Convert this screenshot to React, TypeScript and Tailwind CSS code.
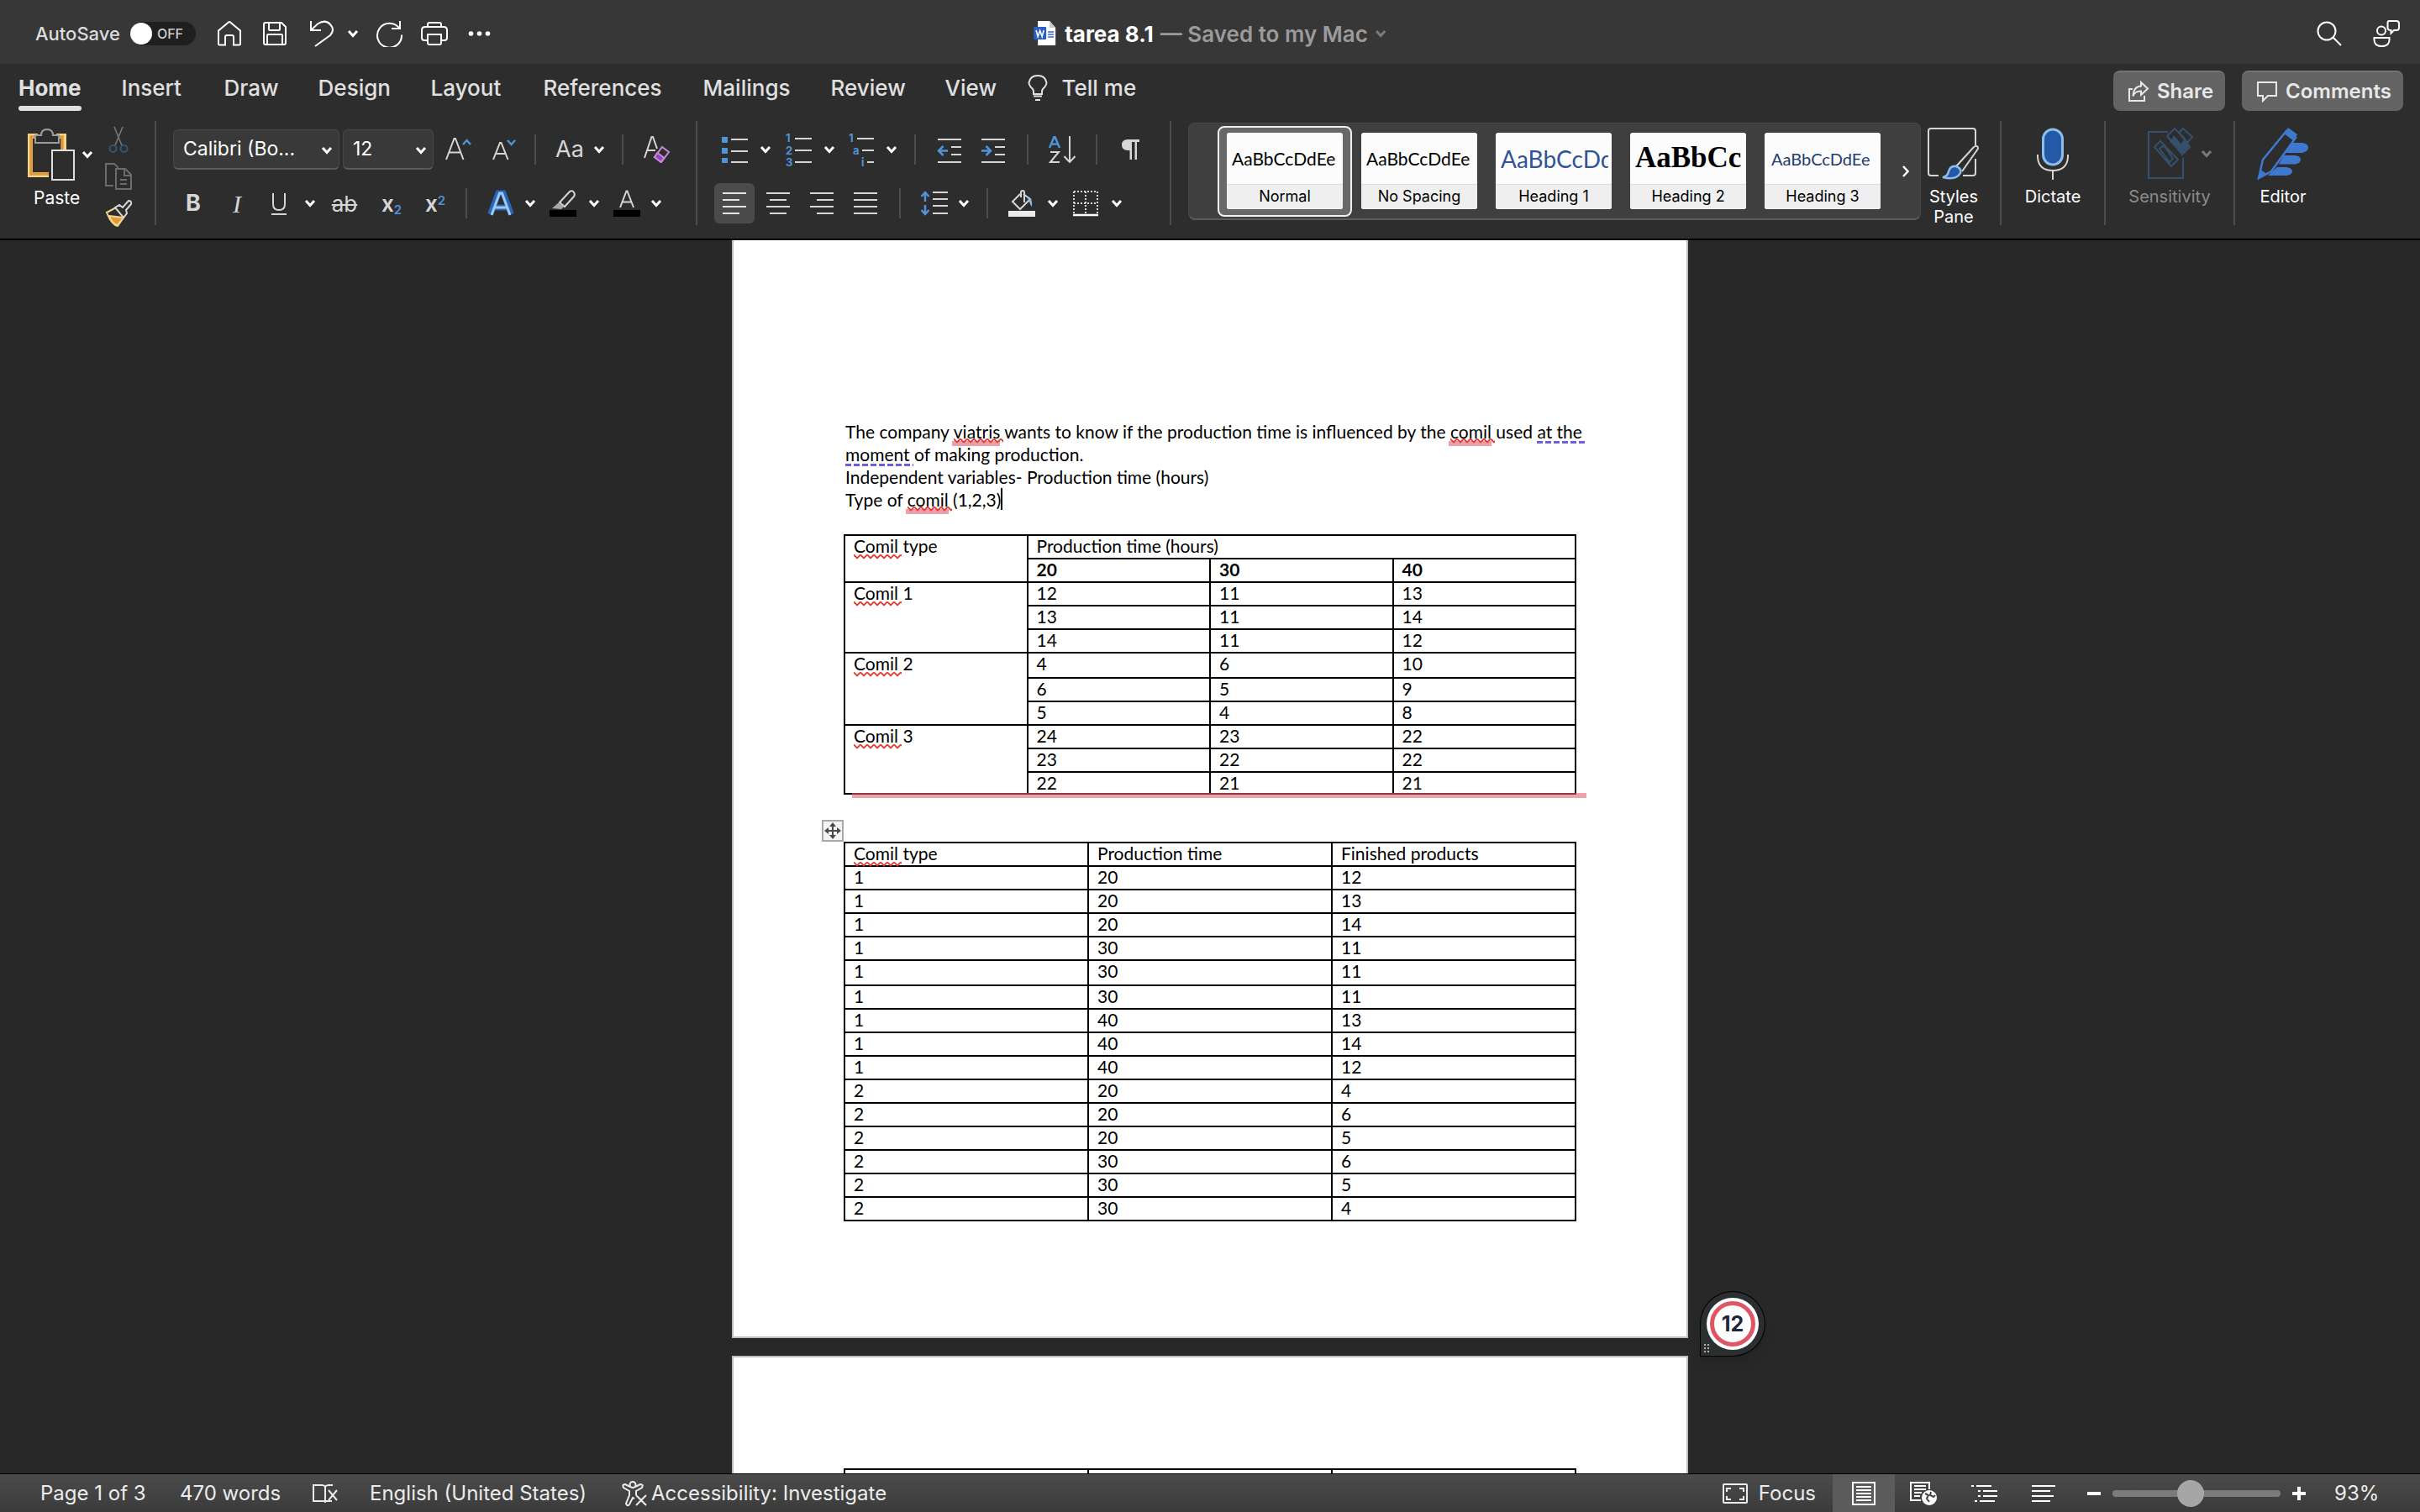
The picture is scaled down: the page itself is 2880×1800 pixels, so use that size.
import React from "react";

const UI = "font-['Inter',sans-serif]";
const DOC = "font-['Lato',sans-serif]";

type SvgProps = { w?: number; h?: number; children: React.ReactNode; className?: string };

function Svg({ w = 32, h = 32, children, className = "" }: SvgProps) {
  return (
    <svg width={w} height={h} viewBox={`0 0 ${w} ${h}`} fill="none" stroke="currentColor" strokeWidth={2} className={`shrink-0 ${className}`} aria-hidden="true">
      {children}
    </svg>
  );
}

function Tool({ label, className = "", children }: { label: string; className?: string; children: React.ReactNode }) {
  return (
    <button aria-label={label} className={`flex h-12 w-8 shrink-0 items-center justify-center text-[#d6d6d6] ${className}`}>
      {children}
    </button>
  );
}

function ChevronGlyph({ className = "" }: { className?: string }) {
  return (
    <Svg w={14} h={10} className={className}>
      <path d="M2 2l5 5.500L12 2" strokeWidth={3} />
    </Svg>
  );
}

function Chevron({ label, className = "" }: { label: string; className?: string }) {
  return (
    <button aria-label={label} className={`flex h-12 w-[14px] shrink-0 items-center text-white ${className}`}>
      <ChevronGlyph />
    </button>
  );
}

function Sep({ className = "" }: { className?: string }) {
  return <div className={`h-9 w-[2px] shrink-0 bg-[#4c4c4c] ${className}`} />;
}

function GroupSep({ className = "" }: { className?: string }) {
  return <div className={`h-[124px] w-[2px] shrink-0 bg-[#4c4c4c] ${className}`} />;
}

function Picker({ label, value, className }: { label: string; value: string; className: string }) {
  return (
    <div className={`relative h-12 shrink-0 ${className}`}>
      <select aria-label={label} className="h-full w-full appearance-none rounded-md border border-b-2 border-[#484848] border-b-[#5a5a5a] bg-[#393939] pl-[11px] pr-8 text-[23px] text-white">
        <option>{value}</option>
      </select>
      <ChevronGlyph className="pointer-events-none absolute right-2 top-5 text-white" />
    </div>
  );
}

/* ---------- title bar ---------- */

function TitleBar() {
  return (
    <header className="relative flex h-[76px] shrink-0 items-center bg-[#373737] pb-0 pl-[42px] pr-6 pt-1 text-white">
      <label htmlFor="autosave" className="text-[22px] font-medium text-[#dcdcdc]">AutoSave</label>
      <span className="relative ml-3 h-7 w-[78px] rounded-full bg-[#1f1f1f]">
        <input id="autosave" type="checkbox" role="switch" className="absolute inset-0 h-full w-full appearance-none rounded-full" />
        <span className="pointer-events-none absolute left-0 top-[1px] h-[26px] w-[26px] rounded-full bg-white" />
        <span className="pointer-events-none absolute left-8 top-0 text-[16px] font-medium leading-7 text-[#cfcfcf]">OFF</span>
      </span>
      <nav className="ml-6 flex items-center">
        <button aria-label="Home"><Svg><path d="M3 29V12.500L15 2.400q1-.8 2 0L29 12.500V28q0 1.500-1.500 1.500H21V20q0-2-2-2h-6q-2 0-2 2v9.500H4.500Q3 29.500 3 28z" /></Svg></button>
        <button aria-label="Save" className="ml-[22px]">
          <Svg><path d="M5 3h19l5 5v19q0 2-2 2H5q-2 0-2-2V5q0-2 2-2zM9 3v8q0 1 1 1h11q1 0 1-1V3M7 29V18q0-1 1-1h16q1 0 1 1v11" /></Svg>
        </button>
        <button aria-label="Undo" className="ml-6"><Svg><path d="M3 1v11h12M3 12l8-7.500Q20-1.500 26 5t0 13L8 31" /></Svg></button>
        <button aria-label="Undo options" className="ml-[14px]"><ChevronGlyph /></button>
        <button aria-label="Redo" className="ml-5"><Svg><path d="M29 1v9H19M28.500 10A14.500 14.500 0 1 0 31 17.500" /></Svg></button>
        <button aria-label="Print" className="ml-[22px]">
          <Svg><path d="M8 8V5q0-2 2-2h12q2 0 2 2v3M8 24H4q-3 0-3-3v-9q0-4 4-4h22q4 0 4 4v9q0 3-3 3h-4M8 17h16v10q0 2-2 2H10q-2 0-2-2z" /></Svg>
        </button>
        <button aria-label="More" className="ml-6">
          <Svg w={28} h={8}><g fill="currentColor" stroke="none"><circle cx="3.500" cy="4" r="2.800" /><circle cx="13.500" cy="4" r="2.800" /><circle cx="23.500" cy="4" r="2.800" /></g></Svg>
        </button>
      </nav>
      <div className="absolute left-1/2 flex -translate-x-1/2 items-center whitespace-nowrap text-[26px] font-bold">
        <Svg w={28} h={32}>
          <path d="M5 1h14l7 8v21H5z" fill="#fff" stroke="none" />
          <path d="M19 1l7 8h-7z" fill="#c9c9c9" stroke="none" />
          <path d="M17 14h7M17 17h7M17 20h7" stroke="#2f66c9" strokeWidth={1.500} />
          <rect x="0" y="8" width="15" height="15" rx="1" fill="#2b5fc4" stroke="none" />
          <path d="M3 12l2 7.500 2.500-7 2.500 7L12 12" stroke="#fff" strokeWidth={1.600} />
        </Svg>
        <h1 className="ml-[9px]">tarea 8.1</h1>
        <span className="ml-2 font-semibold text-[#9b9b9b]">— Saved to my Mac</span>
        <ChevronGlyph className="ml-2 text-[#7a7a7a]" />
      </div>
      <div className="ml-auto flex items-center gap-9">
        <button aria-label="Search"><Svg><circle cx="13" cy="13" r="10.500" /><path d="M20.500 20.500L30 30" /></Svg></button>
        <button aria-label="Presence">
          <Svg><circle cx="10" cy="12.500" r="5" /><path d="M1.500 21h18q1 10-9 10t-9-10zM19 1h9q3 0 3 3v5q0 3-3 3h-3l-3.500 3.500V12q-4 0-4-3V4q0-3 1.500-3z" /></Svg>
        </button>
      </div>
    </header>
  );
}

/* ---------- tabs ---------- */

const TABS: [string, string][] = [
  ["Insert", "w-[122px]"],
  ["Draw", "w-[112px]"],
  ["Design", "w-[134px]"],
  ["Layout", "w-[134px]"],
  ["References", "w-[190px]"],
  ["Mailings", "w-[152px]"],
  ["Review", "w-[136px]"],
  ["View", "w-[98px]"],
];

function TabRow() {
  return (
    <div className="flex h-14 items-start pl-[22px] pr-5 pt-2 text-[#e0e0e0]">
      <div className="flex text-[26px] font-medium leading-[42px]">
        <button className="mr-12 flex h-12 flex-col font-bold">
          Home
          <span className="h-[6px] w-full shrink-0 rounded-full bg-[#e0e0e0]" />
        </button>
        {TABS.map(([name, w]) => (
          <button key={name} className={`h-[42px] shrink-0 text-left ${w}`}>{name}</button>
        ))}
        <button className="flex h-[42px] items-center">
          <Svg w={24} h={32}>
            <path d="M7 23v-3Q7 17 4 15 1.500 12 1.500 9.500 3 1 12 1t10.500 8.500Q22.500 12 20 15q-3 2-3 5v3zM7 25.500h10M9 30h6" />
          </Svg>
          <span className="ml-[17px]">Tell me</span>
        </button>
      </div>
      <div className="ml-auto flex gap-5 text-[24px] font-semibold text-[#e8e8e8]">
        <button className="flex h-12 w-[133px] items-center rounded-lg border-t-2 border-[#757575] bg-[#636363] pl-[17px]">
          <Svg w={26} h={26}><path d="M6 10H2v14h18v-6M16 2l8 7.500-8 7.500v-4.500q-7-.5-9.500 6Q7 7 16 6.500z" /></Svg>
          <span className="ml-[9px]">Share</span>
        </button>
        <button className="flex h-12 w-[192px] items-center rounded-lg border-t-2 border-[#757575] bg-[#636363] pl-[17px]">
          <Svg w={26} h={26}><path d="M2 2h22v16H14l-6 6v-6H2z" /></Svg>
          <span className="ml-[9px]">Comments</span>
        </button>
      </div>
    </div>
  );
}

/* ---------- ribbon ---------- */

const BLUE = "#4f94d8";

function Clipboard() {
  return (
    <div className="flex">
      <div className="flex flex-col items-center pt-2">
        <div className="flex items-center">
          <button aria-label="Paste" className="ml-[1px]">
            <Svg w={56} h={64}>
              <path d="M12 10H3v46h22M34 10h9v16" stroke="#f3d489" strokeWidth={6} />
              <path d="M12 11H4v44h21M34 11h7v15" stroke="#e09a3c" strokeWidth={3.500} />
              <path d="M9 18v-9h7q0-7 7-7t7 7h7v9z" fill="#2d2d2d" stroke="#9b9b9b" />
              <rect x="29" y="27" width="26" height="35" fill="#2d2d2d" stroke="#e0e0e0" />
            </Svg>
          </button>
          <button aria-label="Paste options" className="ml-2 text-white"><ChevronGlyph /></button>
        </div>
      </div>
      <div className="ml-[14px] flex flex-col gap-3 pt-[6px]">
        <button aria-label="Cut">
          <Svg><path d="M11 1l9 22M21 1l-9 22" stroke="#777" strokeWidth={1.600} /><circle cx="9.500" cy="27" r="4" stroke="#34556f" /><circle cx="22.500" cy="27" r="4" stroke="#34556f" /></Svg>
        </button>
        <button aria-label="Copy" className="text-[#6c6c6c]">
          <Svg><path d="M10 27H1V1h10l4 4v3M13 7h11l7 7v17H13zM23 7v8h8M18 20h8M18 25h8" /></Svg>
        </button>
        <button aria-label="Format painter">
          <Svg>
            <path d="M2 15l13-7 9 10-9 13Q8 30 2 15z" fill="#2d2d2d" stroke="#f3d489" />
            <path d="M5 19l17 2-7 9Q9 29 5 19z" fill="#e09a3c" stroke="#f3d489" />
            <path d="M12 9l5-3 4 3 7-8q4 0 3 4l-6 7 1 4-4 5z" fill="#2d2d2d" stroke="#d6d6d6" />
          </Svg>
        </button>
      </div>
    </div>
  );
}

function FontGroup() {
  return (
    <div className="ml-5 flex flex-col gap-4 pt-[10px]">
      <div className="flex items-center">
        <Picker label="Font" value="Calibri (Bo..." className="w-[198px]" />
        <Picker label="Font size" value="12" className="ml-1 w-[108px]" />
        <Tool label="Increase font size" className="ml-[14px]">
          <Svg><path d="M1 28L10.500 3h1.500L21.500 28M5 19.500h12.500" /><path d="M21 10l4.500-5L30 10" stroke={BLUE} strokeWidth={2.500} /></Svg>
        </Tool>
        <Tool label="Decrease font size" className="ml-[22px]">
          <Svg><path d="M3 28L11 8h1.500L20.500 28M6 21h11.500" /><path d="M20 5l4.500 5L29 5" stroke={BLUE} strokeWidth={2.500} /></Svg>
        </Tool>
        <Sep className="ml-5" />
        <Tool label="Change case" className="ml-6 text-[27px]">Aa</Tool>
        <Chevron label="Change case options" className="ml-3" />
        <Sep className="ml-5" />
        <Tool label="Clear formatting" className="ml-6">
          <Svg><path d="M1 26L9.500 1H11l5 14M4.500 17H14" /><path d="M22 13l8 6-9 12-8-6z" stroke="#c58bd6" /><path d="M16.500 20l8 6-4 5-7.500-6z" fill="#9a3fb5" stroke="#c58bd6" /></Svg>
        </Tool>
      </div>
      <div className="flex items-center">
        <Tool label="Bold" className="ml-2 text-[27px] font-bold">B</Tool>
        <Tool label="Italic" className="ml-5 font-['Liberation_Serif',serif] text-[30px] italic">I</Tool>
        <Tool label="Underline" className="ml-[18px]">
          <Svg><path d="M9 4v13q0 7 7 7t7-7V4M7 29h18" /></Svg>
        </Tool>
        <Chevron label="Underline options" className="ml-[14px]" />
        <Tool label="Strikethrough" className="ml-[18px] text-[26px] line-through decoration-2">ab</Tool>
        <Tool label="Subscript" className="ml-6 text-[26px] font-semibold">
          <span>x<sub className="text-[15px] text-[#4f94d8]">2</sub></span>
        </Tool>
        <Tool label="Superscript" className="ml-5 text-[26px] font-semibold">
          <span>x<sup className="text-[15px] text-[#4f94d8]">2</sup></span>
        </Tool>
        <Sep className="ml-5" />
        <Tool label="Text effects" className="ml-6">
          <Svg><path d="M3.500 29L13 4h6l9.500 25M8 21h16" stroke="#2a65b8" strokeWidth={7} /><path d="M5 30L14.500 4h3L27 30M9.500 21h13" stroke="#9cc8f2" strokeWidth={3} /></Svg>
        </Tool>
        <Chevron label="Text effect options" className="ml-3" />
        <Tool label="Highlight colour" className="ml-4">
          <Svg><path d="M12 15L24 2q3-2 5 1t-1 6L18 20z" /><path d="M3 22l8-7 6 5-3 3z" fill="#a8a8a8" stroke="none" /><rect y="24" width="32" height="8" fill="#000" stroke="none" /></Svg>
        </Tool>
        <Chevron label="Highlight options" className="ml-[14px]" />
        <Tool label="Font colour" className="ml-4">
          <Svg><path d="M8 21L15.500 1.500h1L24 21M11 14.500h10" /><rect y="24" width="32" height="8" fill="#000" stroke="none" /></Svg>
        </Tool>
        <Chevron label="Font colour options" className="ml-3" />
      </div>
    </div>
  );
}

function ParagraphGroup() {
  return (
    <div className="ml-5 flex w-[542px] shrink-0 flex-col gap-4 pt-[10px]">
      <div className="flex items-center pl-2">
        <Tool label="Bullets">
          <Svg><path d="M12 4h20M12 18h20M12 31h20" /><path d="M1 1h7v7H1zM1 14h7v7H1zM1 26h7v6H1z" fill={BLUE} stroke="none" /></Svg>
        </Tool>
        <Chevron label="Bullet options" className="ml-[14px]" />
        <Tool label="Numbering" className="ml-4">
          <Svg className="overflow-visible"><path d="M12 3h20M12 17h20M12 31h20" /><g fill={BLUE} stroke="none" fontSize="13" fontWeight="700"><text x="1" y="7">1</text><text x="1" y="22">2</text><text x="1" y="36">3</text></g></Svg>
        </Tool>
        <Chevron label="Numbering options" className="ml-[14px]" />
        <Tool label="Multilevel list" className="ml-4">
          <Svg className="overflow-visible"><path d="M10 3h20M16 17h14M22 31h8" /><g fill={BLUE} stroke="none" fontSize="13" fontWeight="700"><text x="0" y="7">1</text><text x="5" y="22">a</text><text x="15" y="36">i</text></g></Svg>
        </Tool>
        <Chevron label="Multilevel options" className="ml-3" />
        <Sep className="ml-5" />
        <Tool label="Decrease indent" className="ml-6">
          <Svg><path d="M2 4h28M18 13h12M18 22h12M2 31h28" /><path d="M14 17.500H3M8.500 12L3 17.500 8.500 23" stroke={BLUE} strokeWidth={2.500} /></Svg>
        </Tool>
        <Tool label="Increase indent" className="ml-5">
          <Svg><path d="M2 4h28M18 13h12M18 22h12M2 31h28" /><path d="M2 17.500h11M7.500 12l5.500 5.500L7.500 23" stroke={BLUE} strokeWidth={2.500} /></Svg>
        </Tool>
        <Sep className="ml-6" />
        <Tool label="Sort" className="ml-6">
          <Svg><path d="M1 14L6.500 1h1L13 14M3.500 9.500h7" stroke={BLUE} strokeWidth={2.500} /><path d="M2 19h10L2 31h11" /><path d="M25 0v30M18.500 24l6.500 7 6.500-7" /></Svg>
        </Tool>
        <Sep className="ml-6" />
        <Tool label="Show formatting marks" className="ml-6">
          <Svg><path d="M12 17q-7 0-7-6.500T12 4h14v3h-3v21h-2.500V7H17v21h-2.500V17z" fill="currentColor" stroke="none" /></Svg>
        </Tool>
      </div>
      <div className="flex items-center">
        <button aria-label="Align left" aria-pressed="true" className="flex h-12 w-12 items-center justify-center rounded-md bg-[#4b4b4b] text-[#e4e4e4]">
          <Svg><path d="M2 4h28M2 12h20M2 20h28M2 28h20" /></Svg>
        </button>
        <Tool label="Centre" className="ml-3"><Svg><path d="M2 4h28M6 12h20M2 20h28M6 28h20" /></Svg></Tool>
        <Tool label="Align right" className="ml-5"><Svg><path d="M2 4h28M10 12h20M2 20h28M10 28h20" /></Svg></Tool>
        <Tool label="Justify" className="ml-5"><Svg><path d="M2 4h28M2 12h28M2 20h28M2 28h28" /></Svg></Tool>
        <Sep className="ml-6" />
        <Tool label="Line spacing" className="ml-6">
          <Svg><path d="M14 3h18M14 11h18M14 19h18M14 28h18" /><path d="M5 14V3M.5 8L5 3l4.500 5M5 18v11M.5 24L5 29l4.500-5" stroke={BLUE} strokeWidth={2.500} /></Svg>
        </Tool>
        <Chevron label="Line spacing options" className="ml-3" />
        <Sep className="ml-5" />
        <Tool label="Shading" className="ml-6">
          <Svg><path d="M14 5L5 14l9 9 12-12-8-6M15 9V3q0-2 2-2t2 2v12" /><path d="M22 8q7 0 6 12-2-2-3-6z" fill="#8dbdea" stroke="none" /><rect y="25" width="32" height="7" fill="#ececec" stroke="none" /></Svg>
        </Tool>
        <Chevron label="Shading options" className="ml-[14px]" />
        <Tool label="Borders" className="ml-4">
          <Svg><path d="M2 2h28M2 2v26M30 2v26M16 2v26M2 16h28" strokeDasharray="2 2" /><path d="M1 30h30" stroke="#fff" strokeWidth={2.500} /></Svg>
        </Tool>
        <Chevron label="Border options" className="ml-[14px]" />
      </div>
    </div>
  );
}

const STYLES: [string, string, string][] = [
  ["Normal", "AaBbCcDdEe", "text-[21px] text-black px-[6px]"],
  ["No Spacing", "AaBbCcDdEe", "text-[21px] text-black px-[6px]"],
  ["Heading 1", "AaBbCcDd", "text-[28px] text-[#2f5496] ml-[6px] mr-1"],
  ["Heading 2", "AaBbCc", "text-[35px] text-black font-bold font-['Liberation_Serif',serif] ml-[6px] mr-0"],
  ["Heading 3", "AaBbCcDdEe", "text-[20px] text-[#243c70] px-2"],
];

function StyleGallery() {
  return (
    <div className="ml-5 mt-[2px] flex h-[116px] w-[872px] shrink-0 items-center rounded-lg border border-b-2 border-[#484848] border-b-[#5c5c5c] bg-[#3f3f3f] pl-[34px]">
      {STYLES.map(([name, sample, cls], i) => (
        <button
          key={name}
          className={`flex h-[108px] w-40 shrink-0 items-center justify-center rounded-lg border-2 ${i === 0 ? "border-[#f0f0f0] bg-[#686868]" : "border-transparent"}`}
        >
          <span className="flex h-[91px] w-[138px] flex-col overflow-hidden rounded-[3px] bg-[#fcfcfc] text-black">
            <span className={`flex h-[61px] items-center overflow-hidden whitespace-nowrap font-['Lato',sans-serif] ${cls}`}>{sample}</span>
            <span className="h-[30px] border-t border-[#dcdcdc] bg-[#efefef] text-center text-[18px] leading-[27px]">{name}</span>
          </span>
        </button>
      ))}
      <button aria-label="More styles" className="ml-[14px] text-white">
        <Svg w={10} h={16}><path d="M2 2l5.500 6L2 14" strokeWidth={2.500} /></Svg>
      </button>
    </div>
  );
}

function BigButton({ label, className, disabled, children }: { label: React.ReactNode; className: string; disabled?: boolean; children: React.ReactNode }) {
  return (
    <button disabled={disabled} className={`flex shrink-0 flex-col items-center pt-[6px] text-[20px] leading-6 ${disabled ? "text-[#8b8b8b]" : "text-white"} ${className}`}>
      <span className="mb-[6px] flex h-[66px] items-center">{children}</span>
      {label}
    </button>
  );
}

function Ribbon() {
  return (
    <div className="flex h-[152px] items-start pt-3">
      <div className="flex w-[184px] shrink-0 flex-col pl-8">
        <div className="relative">
          <Clipboard />
          <span className="absolute bottom-[22px] left-2 text-[21px] leading-6 text-white">Paste</span>
        </div>
      </div>
      <GroupSep />
      <div className="w-[642px] shrink-0"><FontGroup /></div>
      <GroupSep />
      <ParagraphGroup />
      <GroupSep />
      <StyleGallery />
      <BigButton className="ml-1 w-[70px]" label={<span>Styles<br />Pane</span>}>
        <Svg w={64} h={64}>
          <path d="M58 22V5q0-3-3-3H5Q2 2 2 5v50q0 3 3 3h9M58 38v17q0 3-3 3H43" stroke="#d6d6d6" />
          <path d="M35 47L56 24q5-3 5 2L42 53" stroke="#d6d6d6" />
          <path d="M19 60q6-1 7-7 2-7 9-6 7 3 5 8-5 9-21 5z" fill="#2459a8" stroke="#8dbdea" strokeWidth={2.500} />
        </Svg>
      </BigButton>
      <GroupSep className="ml-5" />
      <BigButton className="w-[122px]" label="Dictate">
        <Svg w={40} h={64}>
          <rect x="8.500" y="3" width="23" height="42" rx="11.500" fill="#2459a8" stroke="#8dbdea" strokeWidth={3} />
          <path d="M2 33v3q1 16 18 16t18-16v-3M20 52v11" stroke="#d6d6d6" />
        </Svg>
      </BigButton>
      <GroupSep />
      <BigButton className="relative w-[152px]" disabled label="Sensitivity">
        <Svg w={56} h={64} className="mr-4 text-[#34506a]">
          <path d="M25 6H2v55h41V37" />
          <path d="M9 24l7-7 21 22-8 8zM15 26l5-4 11 16-4 4z" />
          <path d="M24 11l9-9 12 12 6 10-9 9z" />
          <path d="M25 12l17 20 8-8-6-7-3 5-9-10-3 6z" fill="#34506a" />
          <path d="M38 7l5-5 11 10-6 7z" />
        </Svg>
        <ChevronGlyph className="-ml-2 -mr-6 text-[#7a7a7a]" />
      </BigButton>
      <GroupSep />
      <BigButton className="ml-5 w-[74px]" label="Editor">
        <Svg w={64} h={64} className="text-[#3f78cf]">
          <path d="M41 19h14q7 1 7 5.500T55 31H35zM33 34h14q6 1 6 5t-6 5.500H27zM25 48h11q7 1 7 5t-7 5H14z" fill="currentColor" stroke="none" />
          <path d="M3 61l5-22L36 5l11 8-29 40z" fill="#2d2d2d" strokeWidth={2.500} />
          <path d="M38 1l11 8-4 8-12-9zM3 62l2-11 8 5z" fill="currentColor" stroke="none" />
        </Svg>
      </BigButton>
    </div>
  );
}

/* ---------- document ---------- */

function Squiggle({ children, flagged }: { children: string; flagged?: boolean }) {
  return (
    <span className="relative inline-block">
      {children}
      {flagged && <span className="absolute -left-[2px] right-0 top-[25px] h-[6px] bg-[#eb9fab]" />}
      <svg className="absolute -right-1 left-0 top-[21px] h-[7px] w-[calc(100%+4px)]" aria-hidden="true">
        <defs>
          <pattern id="wave" width="8" height="7" patternUnits="userSpaceOnUse">
            <path d="M0 1.500L4 5.500 8 1.500" fill="none" stroke="#e23b30" strokeWidth="1.800" />
          </pattern>
        </defs>
        <rect width="100%" height="7" fill="url(#wave)" />
      </svg>
    </span>
  );
}

function Grammar({ children }: { children: string }) {
  return (
    <span className="relative inline-block">
      {children}
      <span className="absolute -right-1 left-0 top-[25px] h-[3px] bg-[repeating-linear-gradient(90deg,#6b5fe0_0_7px,transparent_7px_10px)]" />
    </span>
  );
}

const CELL = "border-2 border-black p-0 pl-[10px] text-left align-top font-normal leading-6";

const GROUPS: [string, string[][]][] = [
  ["1", [["12", "11", "13"], ["13", "11", "14"], ["14", "11", "12"]]],
  ["2", [["4", "6", "10"], ["6", "5", "9"], ["5", "4", "8"]]],
  ["3", [["24", "23", "22"], ["23", "22", "22"], ["22", "21", "21"]]],
];

function rowHeight(group: string, index: number) {
  if (group === "2" && index === 0) return "h-[30px]";
  if (group === "3" && index === 2) return "h-[26px]";
  return "h-7";
}

function CrossTable() {
  return (
    <div className="relative -ml-[2px] mt-7 w-[872px]">
      <table className="w-full table-fixed border-collapse">
        <tbody>
          <tr className="h-7">
            <th rowSpan={2} className={CELL}><Squiggle>Comil</Squiggle> type</th>
            <th colSpan={3} className={CELL}>Production time (hours)</th>
          </tr>
          <tr className="h-7">
            {["20", "30", "40"].map((h) => (
              <th key={h} className={CELL}><b>{h}</b></th>
            ))}
          </tr>
          {GROUPS.map(([n, rows]) =>
            rows.map((row, i) => (
              <tr key={n + i} className={rowHeight(n, i)}>
                {i === 0 && <th rowSpan={3} className={CELL}><Squiggle>Comil</Squiggle> {n}</th>}
                {row.map((v, j) => <td key={j} className={CELL}>{v}</td>)}
              </tr>
            ))
          )}
        </tbody>
      </table>
      <div className="absolute -bottom-1 -right-3 left-[10px] h-[6px] bg-[#e06377]/60" />
    </div>
  );
}

const RUNS: string[][] = [
  ["1", "20", "12"], ["1", "20", "13"], ["1", "20", "14"],
  ["1", "30", "11"], ["1", "30", "11"], ["1", "30", "11"],
  ["1", "40", "13"], ["1", "40", "14"], ["1", "40", "12"],
  ["2", "20", "4"], ["2", "20", "6"], ["2", "20", "5"],
  ["2", "30", "6"], ["2", "30", "5"], ["2", "30", "4"],
];

function RunTable() {
  return (
    <div className="relative -ml-[2px] mt-14 w-[872px]">
      <button aria-label="Move table" className="absolute -left-[26px] -top-[26px] h-[26px] w-[26px] border-2 border-[#a8a8a8] bg-[#f4f4f4] text-[#4a4a4a]">
        <Svg w={22} h={22}><path d="M11 3v16M3 11h16" /><path d="M11 1l4 5H7zM11 21l4-5H7zM1 11l5-4v8zM21 11l-5-4v8z" fill="currentColor" stroke="none" /></Svg>
      </button>
      <table className="w-full table-fixed border-collapse">
        <thead>
          <tr className="h-7">
            <th className={CELL}><Squiggle>Comil</Squiggle> type</th>
            <th className={CELL}>Production time</th>
            <th className={CELL}>Finished products</th>
          </tr>
        </thead>
        <tbody>
          {RUNS.map((row, i) => (
            <tr key={i} className={i === 4 ? "h-[30px]" : "h-7"}>
              {row.map((v, j) => <td key={j} className={CELL}>{v}</td>)}
            </tr>
          ))}
        </tbody>
      </table>
    </div>
  );
}

const SHEET = "mx-auto w-[1138px] shrink-0 border-x-2 border-[#bdbdbd] bg-white pl-[133px]";

function Document() {
  return (
    <main className={`relative flex min-h-0 flex-1 flex-col overflow-hidden border-t-2 border-black bg-[#282828] text-[21px] leading-[27px] text-black ${DOC}`}>
      <div className="relative mx-auto">
        <article className={`${SHEET} h-[1307px] border-b-2 pt-[214px]`}>
          <p className="whitespace-nowrap">
            The company <Squiggle flagged>viatris</Squiggle> wants to know if the production time is influenced by the <Squiggle flagged>comil</Squiggle> used <Grammar>at the</Grammar>
            <br />
            <Grammar>moment</Grammar> of making production.
          </p>
          <p>Independent variables- Production time (hours)</p>
          <p className="flex">
            <span>Type of <Squiggle flagged>comil</Squiggle> (1,2,3)</span>
            <span className="h-[26px] w-[2px] bg-black" />
          </p>
          <CrossTable />
          <RunTable />
        </article>
        <aside className={`absolute -right-[92px] bottom-[-22px] flex h-[78px] w-[78px] items-center justify-center rounded-full rounded-bl-lg border border-black bg-[#2b2f2f] shadow-lg ${UI}`}>
          <button className="flex h-[62px] w-[62px] items-center justify-center rounded-full bg-white">
            <span className="flex h-[54px] w-[54px] items-center justify-center rounded-full border-[5px] border-[#e05566] text-[25px] font-bold text-[#1f243f]">12</span>
          </button>
          <span className="absolute bottom-1 left-1 grid grid-cols-2 gap-[2px]">
            {[0, 1, 2, 3, 4, 5].map((d) => <i key={d} className="h-[2px] w-[2px] bg-[#b0b0b0]" />)}
          </span>
        </aside>
      </div>
      <article className={`${SHEET} mt-[21px] h-[1307px] border-t-2 pt-[132px]`}>
        <table className="-ml-[2px] w-[872px] table-fixed border-collapse">
          <tbody>
            <tr className="h-7">
              <td className={CELL} />
              <td className={CELL} />
              <td className={CELL} />
            </tr>
          </tbody>
        </table>
      </article>
    </main>
  );
}

/* ---------- status bar ---------- */

function StatusBar() {
  return (
    <footer className="flex h-[46px] shrink-0 items-center border-t border-black bg-gradient-to-b from-[#4b4b4b] to-[#3b3b3b] pl-12 pr-[50px] text-[24px] text-[#ececec]">
      <button className="w-[166px] text-left">Page 1 of 3</button>
      <button className="w-[156px] text-left">470 words</button>
      <button aria-label="Proofing">
        <Svg w={34} h={30}><path d="M17 24H3V5h10q3 0 4 2v19M17 7q1-2 4-2h5M17 24h8M21 11l10 12M31 11L21 23" /></Svg>
      </button>
      <button className="ml-9 w-[299px] text-left">English (United States)</button>
      <button className="flex items-center">
        <Svg w={32} h={32} className="mr-1"><circle cx="14" cy="5.500" r="3.500" /><path d="M11 8L5 5Q1 5 3 9l7 4v5L6 28q2 4 4 1l4-8 2 1M17 8l6-3q4 0 2 4l-7 4v5M18 18l12 12M30 18L18 30" /></Svg>
        Accessibility: Investigate
      </button>
      <div className="ml-auto flex h-full items-center">
        <button className="flex items-center">
          <Svg w={32} h={26}><rect x="2" y="2" width="28" height="22" rx="1" /><path d="M6 11V7h5M21 7h5v4M26 16v4h-5M11 20H6v-4" /></Svg>
          <span className="ml-3">Focus</span>
        </button>
        <button aria-label="Print layout" aria-pressed="true" className="ml-5 flex h-full w-[74px] items-center justify-center bg-[#5b5b5b] text-white">
          <Svg w={30} h={28}><rect x="2" y="1" width="26" height="26" /><path d="M6 6h18M6 10h18M6 14h18M6 18h18M6 22h18" /></Svg>
        </button>
        <button aria-label="Web layout" className="ml-[17px] text-white">
          <Svg w={36} h={30}><path d="M14 23H2V2h22v8M6 6h14M6 10h14M6 14h9M6 18h7" /><circle cx="24" cy="20" r="9" fill="#fff" stroke="none" /><path d="M19 15l4 2-2 4 3 4M26 13l-1 4 4 2 2-2" stroke="#444" /></Svg>
        </button>
        <button aria-label="Outline" className="ml-[38px] text-white">
          <Svg w={32} h={26}><path d="M0 4h3M6 4h18M8 10h3M14 10h17M8 16h3M14 16h17M4 22h3M10 22h18" /></Svg>
        </button>
        <button aria-label="Draft" className="ml-10 text-white">
          <Svg w={28} h={26}><path d="M0 4h28M0 10h22M0 16h26M0 22h22" /></Svg>
        </button>
        <button aria-label="Zoom out" className="ml-[38px] h-[4px] w-4 bg-white" />
        <input
          type="range"
          aria-label="Zoom"
          min={10}
          max={190}
          defaultValue={93}
          className="ml-[14px] h-2 w-[200px] appearance-none rounded-full bg-[#7b7b7b] [&::-webkit-slider-thumb]:h-8 [&::-webkit-slider-thumb]:w-8 [&::-webkit-slider-thumb]:appearance-none [&::-webkit-slider-thumb]:rounded-full [&::-webkit-slider-thumb]:bg-[#a6a6a6]"
        />
        <button aria-label="Zoom in" className="ml-[14px] text-white">
          <Svg w={16} h={16}><path d="M8 0v16M0 8h16" strokeWidth={4} /></Svg>
        </button>
        <button className="ml-[34px] w-[52px] text-left">93%</button>
      </div>
    </footer>
  );
}

export default function App() {
  return (
    <div className={`flex h-screen flex-col overflow-hidden bg-[#282828] ${UI}`}>
      <TitleBar />
      <section className="shrink-0 bg-[#2d2d2d]">
        <TabRow />
        <Ribbon />
      </section>
      <Document />
      <StatusBar />
    </div>
  );
}
